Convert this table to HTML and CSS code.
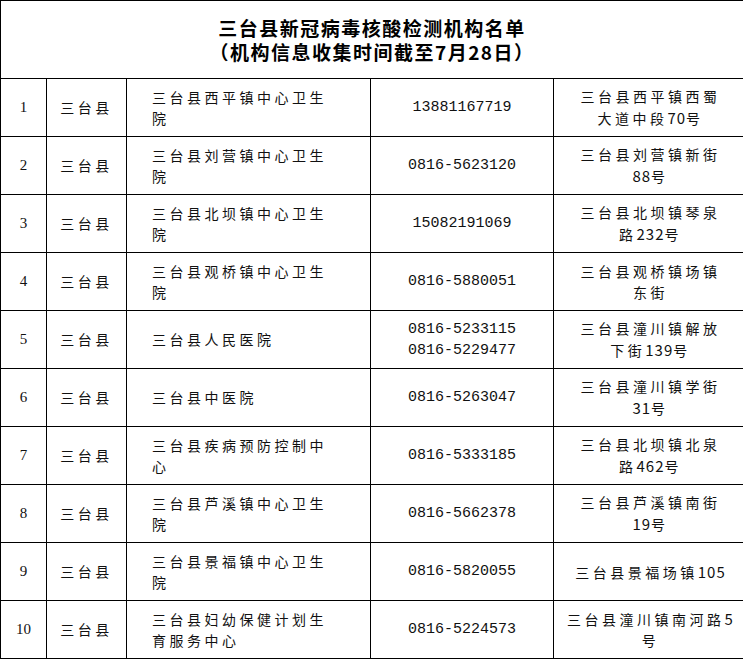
FILE: index.html
```html
<!DOCTYPE html>
<html lang="zh-CN">
<head>
<meta charset="utf-8">
<title>三台县新冠病毒核酸检测机构名单</title>
<link rel="stylesheet" href="styles.css">
</head>
<body>
<table class="sheet">
  <colgroup>
    <col class="c-no"><col class="c-county"><col class="c-name"><col class="c-phone"><col class="c-addr">
  </colgroup>
  <tr class="title-row">
    <td colspan="5" class="title">三台县新冠病毒核酸检测机构名单<br>（机构信息收集时间截至7月28日）</td>
  </tr>
  <tr><td class="no">1</td><td class="county">三台县</td><td class="name">三台县西平镇中心卫生<br>院</td><td class="phone">13881167719</td><td class="addr">三台县西平镇西蜀<br>大道中段<span class="num">70</span>号</td></tr>
  <tr><td class="no">2</td><td class="county">三台县</td><td class="name">三台县刘营镇中心卫生<br>院</td><td class="phone">0816-5623120</td><td class="addr">三台县刘营镇新街<br><span class="num">88</span>号</td></tr>
  <tr><td class="no">3</td><td class="county">三台县</td><td class="name">三台县北坝镇中心卫生<br>院</td><td class="phone">15082191069</td><td class="addr">三台县北坝镇琴泉<br>路<span class="num">232</span>号</td></tr>
  <tr><td class="no">4</td><td class="county">三台县</td><td class="name">三台县观桥镇中心卫生<br>院</td><td class="phone">0816-5880051</td><td class="addr">三台县观桥镇场镇<br>东街</td></tr>
  <tr><td class="no">5</td><td class="county">三台县</td><td class="name">三台县人民医院</td><td class="phone">0816-5233115<br>0816-5229477</td><td class="addr">三台县潼川镇解放<br>下街<span class="num">139</span>号</td></tr>
  <tr><td class="no">6</td><td class="county">三台县</td><td class="name">三台县中医院</td><td class="phone">0816-5263047</td><td class="addr">三台县潼川镇学街<br><span class="num">31</span>号</td></tr>
  <tr><td class="no">7</td><td class="county">三台县</td><td class="name">三台县疾病预防控制中<br>心</td><td class="phone">0816-5333185</td><td class="addr">三台县北坝镇北泉<br>路<span class="num">462</span>号</td></tr>
  <tr><td class="no">8</td><td class="county">三台县</td><td class="name">三台县芦溪镇中心卫生<br>院</td><td class="phone">0816-5662378</td><td class="addr">三台县芦溪镇南街<br><span class="num">19</span>号</td></tr>
  <tr><td class="no">9</td><td class="county">三台县</td><td class="name">三台县景福镇中心卫生<br>院</td><td class="phone">0816-5820055</td><td class="addr">三台县景福场镇<span class="num">105</span></td></tr>
  <tr><td class="no">10</td><td class="county">三台县</td><td class="name">三台县妇幼保健计划生<br>育服务中心</td><td class="phone">0816-5224573</td><td class="addr">三台县潼川镇南河路<span class="num">5</span><br>号</td></tr>
</table>
</body>
</html>
```
FILE: styles.css
```css
html, body {
  margin: 0;
  padding: 0;
  background: #fff;
}

.sheet {
  border-collapse: collapse;
  table-layout: fixed;
  width: 743px;
  color: #111;
  font-family: "Noto Sans CJK SC", "Liberation Serif", sans-serif;
}

.c-no { width: 46px; }
.c-county { width: 80px; }
.c-name { width: 244px; }
.c-phone { width: 183px; }
.c-addr { width: 190px; }

.sheet td {
  border: 1px solid #000;
  height: 57px;
  padding: 0;
  vertical-align: middle;
  font-size: 14px;
  line-height: 21px;
  letter-spacing: 3.5px;
  white-space: nowrap;
}

.title-row td.title {
  height: 77px;
  text-align: center;
  font-weight: bold;
  font-size: 19px;
  line-height: 24px;
  letter-spacing: 1.5px;
  color: #000;
}

.sheet td.no {
  text-align: center;
  font-family: "Liberation Serif", serif;
  font-size: 15px;
  letter-spacing: 0;
}

.sheet td.county {
  text-align: center;
}

.sheet td.name {
  padding-left: 25px;
  text-align: left;
}

.sheet td.phone {
  text-align: center;
  font-family: "Liberation Mono", monospace;
  font-size: 15px;
  letter-spacing: 0;
}

.sheet td.addr {
  text-align: center;
  padding-left: 4px;
}

.num {
  letter-spacing: 1px;
  font-size: 15px;
}
```
